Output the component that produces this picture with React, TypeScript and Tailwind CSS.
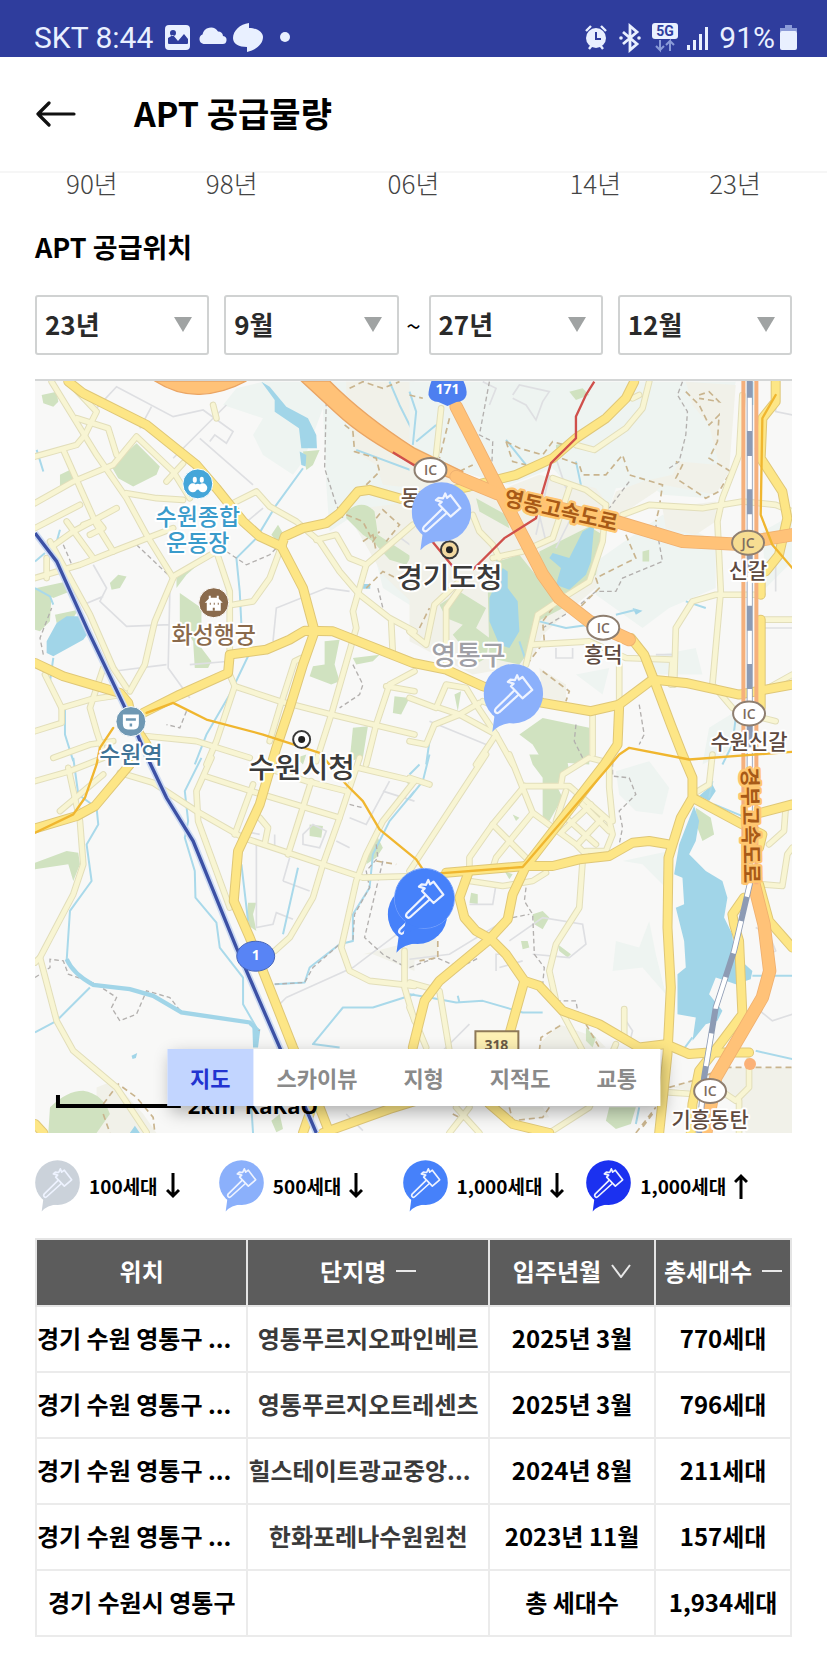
import { clsx, type ClassValue } from "clsx";
import React from "react";
import { twMerge } from "tailwind-merge";

function cn(...inputs: ClassValue[]) {
  return twMerge(clsx(inputs));
}

const KR = "font-['Noto_Sans_CJK_KR','Noto_Sans',sans-serif]";

/* ------------------------------------------------------------------ */
/* Status bar                                                          */
/* ------------------------------------------------------------------ */

function StatusBar() {
  return (
    <div className="flex h-[57px] items-end justify-between bg-[#2f3d9d] pr-[30px] pb-[2px] pl-[34px] font-[Roboto,sans-serif] text-[30px] leading-[34px] text-[#e9f0ff]">
      <div className="flex items-center">
        <span>SKT 8:44</span>
        <svg viewBox="0 0 126 30" className="ml-[12px] h-[30px] w-[126px]" fill="#e9f0ff">
          <path
            fillRule="evenodd"
            d="M4 2h17a4 4 0 0 1 4 4v17a4 4 0 0 1-4 4H4a4 4 0 0 1-4-4V6a4 4 0 0 1 4-4Zm-1 18v-5l5-3 5 6 6-7 4 5v4q0 1-1 1H4q-1 0-1-1ZM8 7a3 3 0 1 0 0 6 3 3 0 0 0 0-6Z"
          />
          <path d="M38.500 21a5 5 0 0 1-1-9.500 8.500 8.500 0 0 1 15.500-3 5 5 0 0 1 5 4.500 4 4 0 0 1-1 8Z" />
          <path d="M84 0v5c8 0 14 4 14 9 0 7-7 13-16 15v-5c-8 0-14-3-14-9C68 8 75 1 84 0Z" />
          <circle cx="120" cy="14" r="5" />
        </svg>
      </div>
      <div className="flex items-center">
        <svg viewBox="0 0 124 30" className="mr-[10px] h-[30px] w-[124px]" fill="#e9f0ff">
          {/* alarm */}
          <circle cx="11" cy="15" r="10" />
          <path d="M1 8l5-5M21 8l-5-5M4 26l3-4M18 26l-3-4" stroke="#e9f0ff" strokeWidth="2.4" />
          <path d="M11 9v7h5" fill="none" stroke="#2f3d9d" strokeWidth="2" />
          {/* bluetooth */}
          <path
            d="M38 9l14 12-7 6V3l7 6-14 12"
            fill="none"
            stroke="#e9f0ff"
            strokeWidth="2.8"
          />
          <circle cx="36" cy="15" r="1.8" />
          <circle cx="54" cy="15" r="1.8" />
          {/* network */}
          <rect x="67" y="0" width="26" height="16" rx="3" />
          <text x="80" y="13" textAnchor="middle" fontSize="14" fontWeight="700" fill="#2f3d9d">
            5G
          </text>
          <path
            d="M75 17v10l-4-4M75 27l4-4M85 28V18l-4 4M85 18l4 4"
            fill="none"
            stroke="#8b9bd8"
            strokeWidth="2"
          />
          <path d="M102 22h3v5h-3zM108 17h3v10h-3zM114 11h3v16h-3zM120 4h3v23h-3z" />
        </svg>
        <span>91%</span>
        <svg viewBox="0 0 17 26" className="ml-[5px] h-[26px] w-[17px]">
          <path d="M5 0h7v3h5v4H0V3h5Z" fill="#8b9bd8" />
          <rect y="6" width="17" height="19" rx="2" fill="#e9f0ff" />
        </svg>
      </div>
    </div>
  );
}

/* ------------------------------------------------------------------ */
/* Pin                                                                 */
/* ------------------------------------------------------------------ */

function Pin({ color, ...props }: { color: string } & React.SVGProps<SVGSVGElement>) {
  return (
    <svg viewBox="0 0 135 155" {...props}>
      <path d="M26 110L20 154Q34 135 72 132Z" fill={color} />
      <circle cx="67.5" cy="67.5" r="67" fill={color} />
      <g fill="none" stroke="#eef3ff" strokeWidth="5" strokeLinejoin="round">
        <path d="M76 26l4 10 8-6 22 29-22 19-26-27 6-6-13-4 6-5 10 1Z" />
        <path d="M70 60L28 101q-4 6 0 9 4 3 8-1l43-39" />
      </g>
    </svg>
  );
}

/* ------------------------------------------------------------------ */
/* Map                                                                 */
/* ------------------------------------------------------------------ */

// The base map is drawn in four tiles: [x, y] origin and its shapes
const TILES = [
  {
    at: "translate(0 0)",
    terrain:
      "M700 20H1155V700L1060 640 1040 560 960 430 900 470 890 330 880 100 820 260 790 300 700 240 670 180 700 130 580 90 620 40Z",
    tan: "M950 20H1155V340L1060 330 1040 270 980 230 950 130ZM1000 400L1155 380V690L1060 600 980 460Z",
    green:
      "M35 60L80 50 85 80 70 95 40 85ZM245 275L320 205 390 275 380 300 310 335 265 310ZM90 300L130 280 135 315 90 335ZM240 625L265 600 290 605 270 640 245 645ZM440 610L550 530 470 600 440 640ZM450 655L515 700 515 820 545 860 535 880 495 880 490 800 450 740ZM15 640L65 655 60 740 30 770 15 765ZM20 640L110 620 120 650 70 670ZM75 720L145 705 130 730 80 745ZM885 800L930 795 915 870 930 920 905 930 840 905 850 875 885 870ZM725 480L745 450 760 475 745 505ZM820 230L870 225 850 270 830 285ZM950 410Q1000 370 1035 410L1045 480 1145 545 1130 570 1080 555 1030 500 1000 480 950 430ZM1095 965L1140 970 1115 1020 1090 1015ZM970 1060L1015 1055 1000 1150 960 1160ZM970 850L1050 840 1030 860 980 870Z",
    water:
      "M695 20L720 35 770 95 835 130 860 180 862 220 815 220 808 160 735 110 735 75ZM810 230L830 240 828 275 815 270ZM50 800L80 745 110 725 150 725 175 775 160 795 70 845 50 835ZM1000 628h22v14h-22Z",
    streams:
      "M820 280L740 390 680 490 620 550 630 650 635 750M655 845L600 960 530 1080 495 1170M15 560L45 535M20 225L40 290M90 465L75 520M70 850L60 920M105 1000V1080L130 1160M15 640L60 665 70 690M1080 20L1110 90 1155 180M980 225L1155 290",
    roads: [
      "65 20 120 110 200 240 290 370 350 480 430 610",
      "15 245 140 210 165 180 200 110 115 20",
      "140 130 235 160 260 240",
      "15 385 130 320 250 270 320 185 430 290 480 370",
      "100 225 160 360 200 450 250 530",
      "290 355 380 370 460 375",
      "410 320 460 265",
      "15 460 150 390",
      "60 520 130 470 260 400",
      "110 440 190 550",
      "160 450 200 435 220 460 180 480",
      "15 610 150 570 250 530 430 460",
      "60 500 120 610 180 720 250 880 290 940",
      "430 610 375 740 345 870 300 950",
      "430 605 560 530 600 650 600 830",
      "610 690 670 680 720 610 755 515",
      "610 385 680 350 720 395 800 440 870 500 930 590 990 660 1080 730 1155 770",
      "860 495 920 480 960 550 1010 570 1150 450",
      "1010 570 970 710 980 760 905 1020 860 1160",
      "1085 740 1090 840",
      "1155 890 1080 930 1040 1050 1010 1170",
      "600 900 615 935 750 980 905 1020 1155 1080",
      "615 935 560 1100 530 1170",
      "815 850 795 860 750 1000 720 1100",
      "45 900 95 1000 180 975 280 960",
      "95 1000 95 1045 15 1070",
      "220 880 180 1000 200 1070 220 1130",
      "350 1085 500 1100 660 1150",
      "70 1150 180 1110 250 1100",
      "550 90 560 130",
      "50 550 50 610",
      "1070 935 1155 950",
    ],
    lanes:
      "M190 110L260 35 430 125 520 105 610 170 590 205 555 180 540 200M365 95L330 160M430 250L590 90M510 190L670 330M190 570L230 640 210 680 290 755 420 750M420 650L415 880 480 970M250 890L410 870M730 800L740 700 890 640 960 650M640 450L700 400M480 870L600 860M1155 520L1100 480M160 690L220 665",
    dashes:
      "M890 80L885 280 920 390 940 430M590 530L650 570 720 540 740 520M100 510L130 580M320 510L420 605M40 840L30 790 65 700M1045 640L1060 700M970 870L1000 930 990 960 930 1000M470 1010L450 1060 410 1050",
    trails:
      "M960 40L1000 20 1060 40 1110 20M945 150L970 170 975 230 1040 250 1050 290 1010 330M950 420L1000 440 1030 500 1050 470M1040 430L1060 405 1110 450 1070 500M1010 640L1060 590 1100 610M1000 500L1030 480 1040 530",
  },
  {
    at: "translate(1140 0)",
    terrain:
      "M0 20H980L920 300 900 370 760 360 720 330 620 340 600 400 560 420 430 280 300 330 0 250ZM560 560L760 420 920 500 920 640 780 700 700 760 560 660ZM1060 470L1150 420V560L1070 640ZM980 1010L1020 1080 940 1140 880 1170 900 1060ZM700 850L860 820 880 900 740 900ZM500 900L600 880 580 960Z",
    tan: "M0 250L260 350 390 300 560 340 590 380 570 560 560 640 500 690 400 780 360 870 190 900 0 800ZM830 20L980 30 960 290 920 360 760 330 740 350 560 470 600 400 620 350 700 320 790 300 810 260 930 270 900 150 850 90ZM760 400L920 380 920 440 860 480 770 460ZM390 880L470 930 470 980 400 970Z",
    green:
      "M200 370L290 420 300 460 210 410ZM265 560L330 540 395 620 480 690 385 740 360 830 330 870 240 850 235 640ZM390 530L540 455 580 480 560 600 470 670 430 620 390 590ZM90 690L150 650 230 700 200 760 240 790 230 850 180 880 170 830 130 780 160 750 110 730ZM330 1080L400 1030 540 1060 540 1170 400 1160 370 1110ZM700 530L720 525 720 560 700 560ZM135 960L155 950 145 1010ZM480 50L520 40 540 60 500 75ZM440 210L460 205 460 220 440 220Z",
    water:
      "M280 580L295 590 295 640 325 680 330 770 300 820 270 810 240 740 240 670ZM520 470L555 450 545 560 530 600 480 645 440 630 455 580 420 550 430 535 480 550ZM670 700L700 708 680 720Z",
    streams:
      "M0 50L20 110 10 210M20 200L80 150M290 195L350 270M500 260L515 330M620 720L680 705M265 520L262 560M830 680L890 700M1030 20V90M1040 220L1050 260M390 740L470 760 540 750M60 1100L50 1170M330 800L350 860M980 1030L970 1110 940 1170",
    roads: [
      "95 100 80 240",
      "0 220 100 270 190 320",
      "720 20 700 100 650 160 555 225 500 210",
      "1000 60 990 240 940 370 925 440 935 650 910 930 970 1000",
      "640 420 720 390 880 400 1000 380 1100 390 1150 410",
      "590 390 580 500 540 620 460 670 385 720 350 870",
      "430 310 530 345 590 390",
      "480 340 430 490 340 530 250 550",
      "190 420 210 470 250 510 270 550",
      "370 810 540 800 650 850 790 855 785 930",
      "795 930 800 760 850 680 920 660 1060 660",
      "0 770 50 810 75 690 160 610",
      "110 870 110 700 160 630",
      "630 870 630 990",
      "550 1010 550 1140",
      "0 970 80 1000 110 930 170 940 200 990 260 1080 310 1170",
      "0 1100 50 1110 75 1050 150 1020 210 985",
      "90 1000 150 1020 260 1080 200 1170",
      "220 980 320 1020 380 980",
      "1060 735 1150 735",
      "1060 1030 1100 1040",
      "1060 950 1150 900",
      "670 70 690 60",
    ],
    lanes:
      "M220 20L260 40 240 90M310 60L330 30 420 50 400 80 380 135 350 90 310 70M440 250L470 340M380 480L420 300M390 420L410 500M440 820V850H490V820M1100 540V650M1040 760H1150M740 840H790M60 1040L230 1110M1100 60V110L1150 120M540 400L480 440 440 520",
    dashes:
      "M240 20L210 180 250 200 245 330 300 420M820 20L805 60 835 110 830 180 810 260 780 280M740 450L760 560 640 610 620 650 560 650 500 700 400 760M660 320L600 400M690 990L705 1080 690 1110M500 1050L495 1100 520 1150M610 1140V1170",
    trails:
      "M870 60L900 50 930 80 870 70M830 50L870 90 900 150 930 120 925 200 900 250 965 290 930 350 890 370 800 310 820 270 800 260M290 200L330 220 400 240 430 200 500 220M290 200L310 260 350 270M430 240L510 270 520 300 590 300 640 240 660 300 760 330 750 400 740 440M650 480L680 550 560 610 570 640 510 700M120 130L90 250M150 290L190 270M30 760L60 700M400 890L480 950 470 980M0 60L40 70M430 700L400 740 405 800 360 860",
  },
  {
    at: "translate(0 1140)",
    terrain: "M0 0",
    tan: "M200 1000L250 980 340 1080 380 1137H200ZM1000 600L1155 560V650L1030 600Z",
    green:
      "M15 325L110 290 145 295 150 330 130 380 115 330 15 345ZM60 1060Q110 1010 160 1010 220 1020 240 1080L200 1137H55ZM655 445L680 445 670 480 680 530 650 510ZM840 210L880 215 875 250 840 245ZM1040 240L1060 280 1040 310 1010 330 1020 290ZM1125 75L1155 80 1140 95ZM725 1100L750 1080 760 1125 740 1135ZM800 10L830 0 820 30Z",
    water: "M668 820L692 825 685 880H670ZM305 905L322 897 318 912 308 915ZM300 1137L315 1115 330 1137Z",
    streams:
      "M130 10L145 120 200 160 205 210 170 270 185 380 120 470 110 620M515 10L465 110 475 200 465 250 495 350 497 430 560 505 570 580 640 670 640 750 680 820M635 330L655 500M805 340L760 540M1155 110L1080 200 1030 300 1020 400 970 480V560L930 570 840 640 825 685 735 690M1155 720L1030 760 940 760 850 870 930 880M180 700L110 770 80 800 15 835M665 1060L670 1137",
    roads: [
      "15 80 120 50 220 10",
      "115 40 150 200 160 330 130 420 30 610 80 800 130 890 260 1000 350 1135",
      "270 55 370 85 500 170 640 250 880 330 1000 370 1155 365",
      "545 10 500 110 505 200 600 460",
      "525 65 680 115 830 160 930 190",
      "670 90 615 240",
      "845 80 775 300",
      "990 10 930 190 880 330 850 430 780 550 735 590",
      "690 190 715 220 705 270",
      "1155 80 1060 200 1010 300 980 380 935 580 960 650 1020 680 1155 695",
      "1125 590 1125 700 1155 800",
      "740 50 830 80 950 110",
      "985 40 1155 80",
      "90 170 220 60",
      "15 625 30 610",
    ],
    lanes:
      "M680 270V520L730 510 740 475 790 495M760 380L840 410M780 310L760 380M735 240V290M820 240L850 210 890 230 870 280 820 270ZM1080 80L1010 210 960 190M1060 110L1155 140M920 260L960 280M770 730L970 640 1155 500M640 230L690 240M950 1080L1000 1130M750 750L770 730",
    dashes:
      "M15 670L60 640 60 615 100 620 115 660 200 690 260 730 245 760 270 800 320 780 350 710 420 730 455 775 650 805 690 830M1040 270L1045 310 1010 350 1020 400 975 480 970 560M1060 320L1005 550 1060 600 1130 640M735 690L825 685 850 640 930 570M960 150L1000 160",
    trails:
      "M220 1050L265 990 320 1030 370 1090 375 1137M220 1080L240 1137M1040 320L1100 330",
  },
  {
    at: "translate(1140 1140)",
    terrain:
      "M620 50L720 20 780 100 760 180 680 170 630 120ZM620 560L690 580 720 500 740 600 770 720 700 640 610 650ZM640 320L780 290 770 400 700 330Z",
    tan: "M390 870L450 810 560 850 590 880 500 890H390ZM790 1000L950 940 1150 940V1137H1010L980 1040ZM0 560L80 550 90 610 0 620ZM280 1060L400 1060 420 1090 300 1100Z",
    green:
      "M360 0H470L480 50 440 90 460 130 420 200 400 190 400 70 370 30ZM860 160L905 190 915 240 880 260 865 220ZM370 480L400 470 420 490 400 525 375 510ZM185 415L205 420 205 450 180 445ZM335 560L355 560 360 580 340 585ZM445 570L485 600 475 610 450 590ZM600 1060H680L665 1110 620 1125 590 1100ZM530 820L560 850 550 880 530 860ZM285 350L310 360 300 375ZM310 180L330 190 320 200Z",
    water:
      "M855 155L870 200 860 260 840 300 890 350 940 380 955 430 945 490 970 540 975 600 1030 650 1025 675 980 690 950 680 920 670 900 720 940 770 925 800 890 810 850 860 860 790 805 780 805 660 830 640 825 560 800 460 825 450 820 370 795 360 810 270ZM910 90L920 110 900 140 870 125ZM835 1110",
    streams:
      "M60 0L40 80 0 130M30 30L0 60M910 80L900 130M850 850L820 890M1030 665H1150M0 720L60 730 140 745 220 740 340 775 400 775M145 725L150 745M1040 890L1150 915M915 150L1000 185M690 1060L680 1110M970 610L1000 640",
    roads: [
      "230 0 20 320 0 350",
      "300 0 370 175 500 270 530 300",
      "345 95 250 210 180 310 180 340",
      "345 95 480 95 600 200 610 240 590 290 530 290",
      "370 175 260 310 250 340",
      "250 210 360 320",
      "470 110 440 200",
      "545 150 460 230",
      "580 190 510 265",
      "500 130 600 230",
      "470 190 560 270",
      "600 0 600 100 610 200",
      "455 90 460 60 540 10 580 20",
      "180 380 280 395 370 380 410 355",
      "520 320 510 460 440 570 420 650 440 740 520 890",
      "0 685 90 710 120 890",
      "0 760 50 880",
      "645 765 645 850",
      "1060 390 1120 395 1135 300 1150 280",
      "1130 160 1125 230 1080 270",
      "1020 920 1020 1000 980 1040 950 1020",
      "780 1015 850 1020",
      "620 870 540 1060 420 1137",
      "0 70 60 90",
      "910 0 900 90 850 120",
      "990 1040 990 1137",
      "140 1060 210 1137",
      "180 1060 120 1137",
    ],
    lanes:
      "M260 390L250 450 180 450M300 560L400 490 520 510 530 570 480 610 370 600M0 615L120 600 300 490M260 650V600H290M270 640L340 620M180 810L100 890M650 800L670 830 660 870M1040 520L1080 540 1100 590 1060 610M1040 760L1090 800 1150 780",
    dashes:
      "M610 0V65L660 70 680 120 630 170 640 220 630 270M350 400L345 440 370 480 375 600 405 640 400 690M310 490L360 480M0 640L80 610 150 640 210 610M440 740L500 740 510 800",
    trails:
      "M390 890L395 850 460 810M530 810L570 880M780 1000L850 980 950 940 1150 940M300 1060L310 1100 400 1090 420 1060M680 1137L740 1060M85 560V610L30 620M130 1080L190 1110M730 1080L700 1120",
  },
];

const AVENUES = [
  "115 20 160 55 220 85 350 150 500 270 560 340 640 440 690 485 755 515 820 640 855 770 820 870 780 1000 740 1120 690 1290 625 1430 612 1580 660 1690 790 2020 870 2200 900 2277",
  "755 515 765 485 820 460 890 445 930 415 985 350 1020 345 1115 372 1200 360 1320 335 1460 300 1570 250 1640 190 1730 130 1790 70 1815 20",
  "340 1015 450 960 595 895 600 840 710 825 780 795 825 768 910 770 1150 865 1250 885 1360 935 1540 985 1685 1010 1770 990 1870 915 1970 925 2130 960 2290 930",
  "15 865 100 905 270 955 295 985 310 1050 350 1110",
  "15 1362 140 1325 195 1295 300 1170",
  "1770 990 1765 1110 1725 1170 1490 1475 1450 1560 1435 1635 1375 1700 1230 1820 1185 1880 1150 2020",
  "1250 1495 1490 1475 1570 1475 1650 1455 1740 1445 1810 1405 1860 1400 1920 1410",
  "1315 1500 1290 1570 1305 1630 1340 1670 1385 1695 1430 1740 1485 1820 1530 1835 1600 1910 1710 1950 1830 2020 1910 2010 1980 2040 2040 2035 2160 2035",
  "1485 1820 1440 1980",
  "1805 790 1845 840 1880 930 1925 1050 1960 1140 1990 1210 1990 1270 1955 1330 1918 1450 1915 1660 1925 1840 1915 2040 1890 2277",
  "2000 1275 2140 1350 2200 1380 2190 1420",
  "2195 1315 2290 1290",
  "2145 1570 2110 1620 2115 1650 2130 1700 2140 1920 2080 2000 2010 2090 1990 2190 1985 2277",
  "2190 1530 2220 1640 2290 1720",
  "2240 20 2240 80 2200 130 2195 250 2260 350 2275 430 2250 540 2210 590",
  "2195 600 2195 660",
  "2195 735 2195 1000",
  "1380 2190 1450 2250 1560 2277",
  "850 2190 820 2277",
  "880 2277 1080 2205 1160 2180",
  "15 2250 40 2277",
];

const METRO = [
  "350 1015 430 985 530 1035 700 1080 870 1135 950 1230 1000 1280 1050 1365 1160 1455 1190 1500 1480 1478 1770 1140 1800 1120 1980 1155 2290 1132",
  "2240 60 2200 130 2195 420 2230 510 2290 580",
  "250 1060 210 1120 200 1170 165 1270 130 1320 15 1375",
];

const MOTORWAYS = [
  "1280 95 1400 330 1540 600 1590 670 1680 740 1800 795",
  "1280 305 1400 355 1760 440 1960 500 2120 508 2290 480",
  "2175 1530 2205 1650 2222 1790 2200 1870 2060 2110 2030 2277",
];

const INTERCHANGES = [
  { x: 396, y: 89, label: "IC" },
  { x: 569, y: 247, label: "IC" },
  { x: 714, y: 162, label: "JC" },
  { x: 715, y: 333, label: "IC" },
  { x: 676, y: 711, label: "IC" },
];

const PLACES = [
  { x: 163, y: 144, text: "수원종합", tone: "fill-[#3a9bcb] text-[23px]" },
  { x: 163, y: 170, text: "운동장", tone: "fill-[#3a9bcb] text-[23px]" },
  { x: 179, y: 262, text: "화성행궁", tone: "fill-[#8a6a4c] text-[23px]" },
  { x: 96, y: 383, text: "수원역", tone: "fill-[#3f7396] text-[23px]" },
  { x: 376, y: 124, text: "동", tone: "fill-[#6b5344] text-[21px]" },
  { x: 415, y: 207, text: "경기도청", tone: "fill-[#3a3a3a] text-[29px]" },
  { x: 267, y: 398, text: "수원시청", tone: "fill-[#3a3a3a] text-[29px]" },
  { x: 434, y: 284, text: "영통구", tone: "fill-[#a0a0a6] text-[27px]" },
  { x: 569, y: 281, text: "흥덕", tone: "fill-[#5e4a40] text-[21px]" },
  { x: 714, y: 197, text: "신갈", tone: "fill-[#5e4a40] text-[21px]" },
  { x: 715, y: 368, text: "수원신갈", tone: "fill-[#5e4a40] text-[21px]" },
  { x: 676, y: 747, text: "기흥동탄", tone: "fill-[#5e4a40] text-[21px]" },
];

function Lines({
  points,
  stroke,
  width,
}: {
  points: string[];
  stroke: string;
  width: number;
}) {
  return (
    <g
      fill="none"
      stroke={stroke}
      strokeWidth={width}
      strokeLinejoin="round"
      strokeLinecap="round"
    >
      {points.map((p) => (
        <polyline key={p} points={p} />
      ))}
    </g>
  );
}

function BaseMap() {
  return (
    <g transform="scale(.33333) translate(-15 -18)" fill="none">
      {TILES.map((t) => (
        <g key={t.at} transform={t.at}>
          <path d={t.terrain} fill="#eef4f1" />
          <path d={t.tan} fill="#f1f1e9" />
          <path d={t.green} fill="#d0e2c0" />
          <path d={t.water} fill="#a1d5e8" />
          <path d={t.lanes} stroke="#dedfe2" strokeWidth="5" />
          <path d={t.streams} stroke="#a9d9ea" strokeWidth="6" strokeLinejoin="round" />
          <path d={t.dashes} stroke="#b3b0ae" strokeWidth="4" strokeDasharray="14 9" />
          <path d={t.trails} stroke="#c9b48e" strokeWidth="5" strokeDasharray="18 12" />
        </g>
      ))}
      <path
        d="M110 1755Q130 1800 190 1832L300 1845 370 1865 455 1915 660 1945 685 1970"
        stroke="#a1d5e8"
        strokeWidth="13"
      />

      {TILES.map((t) => (
        <g key={t.at} transform={t.at}>
          <Lines points={t.roads} stroke="#e2deba" width={20} />
        </g>
      ))}
      {TILES.map((t) => (
        <g key={t.at} transform={t.at}>
          <Lines points={t.roads} stroke="#f8f5d3" width={14} />
        </g>
      ))}
      <Lines points={AVENUES} stroke="#dfc777" width={30} />
      <Lines points={AVENUES} stroke="#fde686" width={24} />

      {/* expressways */}
      <path d="M375 18Q440 60 510 58T650 18Z" fill="#ffc278" stroke="#eaa564" strokeWidth="4" />
      <path
        d="M815 18H900Q1000 120 1155 220L1300 290 1290 320 1140 262Q1000 190 920 115Z"
        fill="#ffc278"
        stroke="#eaa564"
        strokeWidth="4"
      />
      <Lines points={MOTORWAYS} stroke="#efb070" width={40} />
      <Lines points={MOTORWAYS} stroke="#ffc278" width={35} />
      <path d="M2143 18V1530M2182 18V1530" stroke="#f5b07c" strokeWidth="12" />
      <circle cx="2163" cy="2070" r="18" fill="#fbb177" />

      {/* railways */}
      <path
        d="M2162 18V1530L2115 1730 2060 1900 2025 2110 2010 2277"
        stroke="#8d9bb4"
        strokeWidth="18"
      />
      <path
        d="M2162 18V1530L2115 1730 2060 1900 2025 2110 2010 2277"
        stroke="#ffffff"
        strokeWidth="13"
        strokeDasharray="100 75"
        strokeDashoffset="-50"
      />
      <path
        d="M15 475L80 560 175 770 300 1030 360 1165 410 1270 490 1400 620 1720 750 2020 860 2277"
        stroke="#cddbf3"
        strokeWidth="20"
      />
      <path
        d="M15 475L80 560 175 770 300 1030 360 1165 410 1270 490 1400 620 1720 750 2020 860 2277"
        stroke="#3c51a5"
        strokeWidth="10"
      />
      <Lines points={METRO} stroke="#f0b62f" width={7} />
      <path
        d="M1695 20L1670 60 1640 125V190L1565 265 1540 350 1520 430 1425 490 1330 585M1155 435L1270 575M1090 232L1155 272"
        stroke="#cf4f4b"
        strokeWidth="7"
      />
    </g>
  );
}

function CityMark({ x, y, fill }: { x: number; y: number; fill: string }) {
  return (
    <g>
      <circle cx={x} cy={y} r="8.5" fill={fill} stroke="#3a3a3a" strokeWidth="2" />
      <circle cx={x} cy={y} r="3.5" fill="#222" />
    </g>
  );
}

function SupplyMap() {
  return (
    <svg viewBox="0 0 758 753" className={cn("block h-auto w-full bg-[#f8f8f7]", KR)}>
      <BaseMap />

      <g
        textAnchor="middle"
        stroke="#ffffff"
        strokeWidth="4"
        strokeLinejoin="round"
        paintOrder="stroke"
        className="font-medium"
      >
        {PLACES.map((p) => (
          <text key={p.text} x={p.x} y={p.y} className={p.tone}>
            {p.text}
          </text>
        ))}
      </g>
      <g
        textAnchor="middle"
        stroke="#ffc66f"
        strokeWidth="5"
        strokeLinejoin="round"
        paintOrder="stroke"
        className="fill-[#a85a17] text-[21px] font-bold"
      >
        <text transform="translate(525 137) rotate(13)">영동고속도로</text>
        <text transform="translate(709 445) rotate(89)">경부고속도로</text>
      </g>

      {/* interchanges */}
      {INTERCHANGES.map((i) => (
        <g key={i.y}>
          <ellipse
            cx={i.x}
            cy={i.y}
            rx="16"
            ry="12"
            fill={i.label === "JC" ? "#f6dd92" : "#ffffff"}
            stroke="#8f7f70"
            strokeWidth="2"
          />
          <text
            x={i.x}
            y={i.y + 5}
            textAnchor="middle"
            className="fill-[#7d6c60] font-['Open_Sans',sans-serif] text-[14px] font-semibold"
          >
            {i.label}
          </text>
        </g>
      ))}

      {/* points of interest */}
      <circle cx="163" cy="103" r="15" fill="#45a6d9" stroke="#fff" />
      <g fill="#ffffff">
        <rect x="158" y="96" width="4" height="6" rx="2" />
        <rect x="165" y="96" width="4" height="6" rx="2" />
        <circle cx="158" cy="107" r="4.5" />
        <circle cx="168" cy="107" r="4.5" />
        <circle cx="163" cy="106" r="3" />
      </g>
      <circle cx="179" cy="222" r="15" fill="#8a6a4c" stroke="#fff" />
      <path
        d="M174 215h2v2h6v-2h2v3l4 4h-2v8h-14v-8h-2l4-4Z"
        fill="#ffffff"
      />
      <path d="M175 223h1M179 223h1M183 223h1M179 227v3" stroke="#8a6a4c" strokeWidth="2" />
      <circle cx="96" cy="341" r="15" fill="#6f98b3" stroke="#fff" />
      <path d="M88 334h16v9q0 6-5 6h-6q-5 0-5-6Z" fill="#ffffff" />
      <path d="M91 339h10M96 343v3" stroke="#6f98b3" strokeWidth="2.5" />
      <CityMark x={267} y={359} fill="#ffffff" />
      <CityMark x={415} y={169} fill="#f3d9a0" />

      {/* road shields */}
      <ellipse cx="221" cy="576" rx="19" ry="15" fill="#5884f5" stroke="#4463b8" />
      <path d="M397 0h32q4 8 3 14-2 7-10 7l-9 4-9-4q-8 0-10-7 0-6 3-14Z" fill="#4d7ff0" />
      <path d="M441 651h43v26h-43Z" fill="#fdf0b4" stroke="#8f7a58" strokeWidth="2" />
      <g textAnchor="middle" className="font-['Open_Sans',sans-serif] text-[14px] font-bold">
        <text x="221" y="580" fill="#ffffff">
          1
        </text>
        <text x="413" y="13" fill="#ffffff">
          171
        </text>
        <text x="462" y="670" fill="#6b5a45">
          318
        </text>
      </g>

      <Pin x="377" y="101" width="60" height="69" color="#8bb0fb" />
      <Pin x="449" y="283" width="60" height="69" color="#8bb0fb" />
      <Pin x="353" y="504" width="60" height="69" color="#4681fa" />
      <circle cx="390" cy="518" r="30" fill="none" stroke="#7ba5fc" />
      <Pin x="360" y="488" width="60" height="69" color="#4681fa" />

      {/* scale */}
      <path d="M23 715v11h123" fill="none" stroke="#000" strokeWidth="4" />
      <g className="font-['Open_Sans',sans-serif] text-[22px] font-bold">
        <text x="153" y="734">
          2km
        </text>
        <text x="210" y="734">
          KaKaO
        </text>
      </g>
    </svg>
  );
}

const MAP_TYPES = ["지도", "스카이뷰", "지형", "지적도", "교통"];

function MapTypeBar() {
  const [active, setActive] = React.useState("지도");
  return (
    <div className="absolute bottom-[27px] left-1/2 flex h-[57px] -translate-x-1/2 bg-white shadow-[4px_6px_16px_rgba(0,0,0,0.3)]">
      {MAP_TYPES.map((type) => (
        <button
          key={type}
          type="button"
          onClick={() => setActive(type)}
          className={cn(
            "px-[23px] text-[22px] font-bold whitespace-nowrap text-[#8a8a8a]",
            active === type && "bg-[#c2d5ff] text-[#2233d0]",
          )}
        >
          {type}
        </button>
      ))}
    </div>
  );
}

/* ------------------------------------------------------------------ */
/* Filters                                                             */
/* ------------------------------------------------------------------ */

function Select({ label, options }: { label: string; options: string[] }) {
  return (
    <div className="relative min-w-0 flex-1">
      <select
        aria-label={label}
        className="block h-[60px] w-full appearance-none rounded-[3px] border-2 border-[#d0d2d2] bg-white px-2 pb-[3px] text-[26px] leading-[36px] font-bold text-[#2a2a2a]"
      >
        {options.map((o) => (
          <option key={o}>{o}</option>
        ))}
      </select>
      <svg
        viewBox="0 0 18 15"
        className="pointer-events-none absolute top-[22px] right-[17px] h-[15px] w-[18px]"
      >
        <path d="M0 0h18L9 15Z" fill="#a0a3a3" />
      </svg>
    </div>
  );
}

function PeriodFilter() {
  return (
    <div className="mt-[28px] flex items-center">
      <div className="flex flex-1 gap-[15px]">
        <Select label="시작 연도" options={["23년", "24년", "25년", "26년", "27년"]} />
        <Select label="시작 월" options={["9월", "10월", "11월", "12월"]} />
      </div>
      <span className="w-[30px] text-center text-[26px] leading-[36px]">~</span>
      <div className="flex flex-1 gap-[15px]">
        <Select label="종료 연도" options={["27년", "26년", "25년", "24년", "23년"]} />
        <Select label="종료 월" options={["12월", "11월", "10월", "9월"]} />
      </div>
    </div>
  );
}

/* ------------------------------------------------------------------ */
/* Legend                                                              */
/* ------------------------------------------------------------------ */

const LEGEND = [
  { color: "#cbd2da", label: "100세대", up: false },
  { color: "#8bb0fb", label: "500세대", up: false },
  { color: "#4681fa", label: "1,000세대", up: false },
  { color: "#1b31f0", label: "1,000세대", up: true },
];

function Legend() {
  return (
    <ul className="mt-[27px] grid grid-cols-[184fr_184fr_184fr_206fr]">
      {LEGEND.map((item) => (
        <li key={item.label + item.color} className="flex items-center">
          <Pin color={item.color} className="h-[52px] w-[45px] shrink-0" />
          <span className="ml-[9px] text-[19px] font-bold whitespace-nowrap">
            {item.label}
          </span>
          <svg
            viewBox="0 0 14 26"
            className={cn("ml-[8px] h-[26px] w-[14px]", item.up && "rotate-180")}
            fill="none"
            stroke="#000"
            strokeWidth="3"
          >
            <path d="M7 0v23M1 17l6 6 6-6" />
          </svg>
        </li>
      ))}
    </ul>
  );
}

/* ------------------------------------------------------------------ */
/* Table                                                               */
/* ------------------------------------------------------------------ */

const COLUMNS = [
  { title: "위치", sort: null, width: "w-[28%]" },
  { title: "단지명", sort: "none", width: "w-[32%]" },
  { title: "입주년월", sort: "down", width: "w-[22%]" },
  { title: "총세대수", sort: "none", width: "w-[18%]" },
];

const ROWS = [
  ["경기 수원 영통구 ...", "영통푸르지오파인베르", "2025년 3월", "770세대"],
  ["경기 수원 영통구 ...", "영통푸르지오트레센츠", "2025년 3월", "796세대"],
  ["경기 수원 영통구 ...", "힐스테이트광교중앙...", "2024년 8월", "211세대"],
  ["경기 수원 영통구 ...", "한화포레나수원원천", "2023년 11월", "157세대"],
  ["경기 수원시 영통구", "", "총 세대수", "1,934세대"],
];

function SupplyTable() {
  return (
    <table className="mt-[26px] w-full table-fixed border-collapse text-[24px] leading-[32px] font-bold">
      <thead>
        <tr className="h-[67px] bg-[#5c5c5c] text-white">
          {COLUMNS.map((c) => (
            <th
              key={c.title}
              className={cn(
                "border-2 border-[#e4e4e4] p-0 pb-[3px] font-bold whitespace-nowrap",
                c.width,
              )}
            >
              {c.sort ? (
                <button type="button" className="inline-flex items-center gap-[10px]">
                  {c.title}
                  <svg
                    viewBox="0 0 20 14"
                    className="h-[14px] w-[20px]"
                    fill="none"
                    stroke="#e8e8e8"
                    strokeWidth="2"
                  >
                    <path d={c.sort === "down" ? "M1 1l9 12 9-12" : "M0 7h20"} />
                  </svg>
                </button>
              ) : (
                c.title
              )}
            </th>
          ))}
        </tr>
      </thead>
      <tbody>
        {ROWS.map((row) => (
          <tr key={row[1]} className="h-[66px]">
            {row.map((cell, i) => (
              <td
                key={i}
                className={cn(
                  "overflow-hidden border-2 border-[#ebebeb] p-0 pb-[3px] text-center whitespace-nowrap",
                  i === 1 && "text-[#3a3a3a]",
                  cell.endsWith("...") && "text-left",
                )}
              >
                {cell}
              </td>
            ))}
          </tr>
        ))}
      </tbody>
    </table>
  );
}

const AXIS_YEARS = ["90년", "98년", "06년", "14년", "23년"];

export default function App() {
  return (
    <div className={cn("min-h-screen bg-white text-black", KR)}>
      <StatusBar />

      <header className="flex h-[116px] items-center border-b-2 border-[#f6f6f6] px-[35px]">
        <button type="button" aria-label="뒤로">
          <svg
            viewBox="0 0 42 26"
            className="h-[26px] w-[42px]"
            fill="none"
            stroke="#111"
            strokeWidth="3.2"
            strokeLinecap="round"
            strokeLinejoin="round"
          >
            <path d="M14 2L3 13l11 11M3 13h36" />
          </svg>
        </button>
        <h1 className="ml-[57px] pb-[2px] text-[34px] leading-[50px] font-bold">APT 공급물량</h1>
      </header>

      <div className="grid grid-cols-[140fr_140fr_224fr_140fr_140fr] px-[22px] text-center text-[26px] leading-[20px] font-light text-[#444]">
        {AXIS_YEARS.map((y) => (
          <span key={y}>{y}</span>
        ))}
      </div>

      <main className="px-[35px] pb-[33px]">
        <h2 className="mt-[34px] text-[27px] leading-[40px] font-bold">APT 공급위치</h2>
        <PeriodFilter />
        <section className="relative mt-[24px] overflow-hidden border-t-2 border-[#d4d6d6]">
          <SupplyMap />
          <MapTypeBar />
        </section>
        <Legend />
        <SupplyTable />
      </main>
    </div>
  );
}
